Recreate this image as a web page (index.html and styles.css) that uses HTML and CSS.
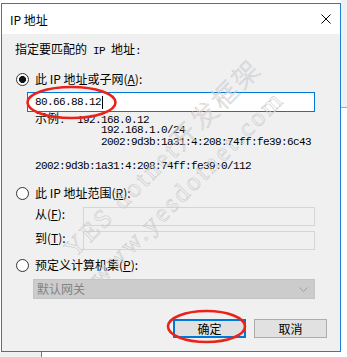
FILE: index.html
```html
<!DOCTYPE html>
<html lang="zh-CN">
<head>
    <meta charset="UTF-8">
    <meta name="viewport" content="width=device-width, initial-scale=1.0">
    <title>IP 地址</title>
    <link rel="stylesheet" href="styles.css">
</head>
<body>

<div class="screen">
  <div class="gap-top"></div>

  <div class="window">
    <div class="titlebar">
      <span class="title">IP 地址</span>
      <svg class="close" width="10" height="10" viewBox="0 0 10 10">
        <path d="M0.5 0.5 L9.5 9.5 M9.5 0.5 L0.5 9.5" stroke="#000" stroke-width="1" />
      </svg>
    </div>

    <div class="dialog">
      <p class="lead">指定要匹配的<span class="mono"> IP </span>地址<span class="mono">:</span></p>

      <div class="radio-row">
        <span class="radio checked"></span>
        <span>此 IP 地址或子网(<u>A</u>):</span>
      </div>
      <div class="textbox active">
        <span class="mono">80.66.88.12</span><span class="caret"></span>
      </div>

      <div class="examples">
        <div class="ex-line"><span class="ex-label">示例<span class="mono">:</span></span><span class="mono">192.168.0.12</span></div>
        <div class="ex-line indent mono">192.168.1.0/24</div>
        <div class="ex-line indent mono">2002:9d3b:1a31:4:208:74ff:fe39:6c43</div>
        <div class="ex-line"></div>
        <div class="ex-line mono">2002:9d3b:1a31:4:208:74ff:fe39:0/112</div>
      </div>

      <div class="radio-row second">
        <span class="radio"></span>
        <span>此 IP 地址范围(<u>R</u>):</span>
      </div>
      <div class="range-row from">
        <span class="range-label">从(<u>F</u>):</span>
        <div class="textbox disabled"></div>
      </div>
      <div class="range-row to">
        <span class="range-label">到(<u>T</u>):</span>
        <div class="textbox disabled"></div>
      </div>

      <div class="radio-row third">
        <span class="radio"></span>
        <span>预定义计算机集(<u>P</u>):</span>
      </div>
      <div class="select">
        <span>默认网关</span>
        <svg width="9" height="5" viewBox="0 0 9 5">
          <path d="M0.5 0.5 L4.5 4.5 L8.5 0.5" fill="none" stroke="#a0a0a0" stroke-width="1" />
        </svg>
      </div>

      <div class="buttons">
        <button class="btn default">确定</button>
        <button class="btn">取消</button>
      </div>
    </div>
  </div>

  <div class="side">
    <div class="side-top"></div>
    <div class="side-rest"></div>
  </div>

  <div class="under">
    <div class="under-left"></div>
    <div class="under-right"></div>
  </div>

  <!-- annotation marks drawn over the screenshot -->
  <svg class="marks" width="347" height="357" viewBox="0 0 347 357">
    <ellipse cx="71.5" cy="102.5" rx="44" ry="15.5" fill="none" stroke="#e8231b" stroke-width="2.6" />
    <ellipse cx="206.5" cy="326.5" rx="38.5" ry="15.5" fill="none" stroke="#e8231b" stroke-width="2.6" />
  </svg>

  <div class="watermark wm-1">YES dotnet开发框架</div>
  <div class="watermark wm-2">www.yesdotnet.com</div>
</div>

</body>
</html>
```

FILE: styles.css
```css
* {
    box-sizing: border-box;
}

body {
    margin: 0;
    background: #fff;
    font-family: "Noto Sans CJK SC", "Noto Sans", sans-serif;
    font-size: 12px;
    color: #000;
}

.screen {
    position: relative;
    width: 347px;
    height: 357px;
    overflow: hidden;
    display: grid;
    grid-template-columns: 1px 340px 6px;
    grid-template-rows: 3px 349px 5px;
}

.gap-top {
    grid-column: 1 / 3;
    grid-row: 1;
}

/* window */

.window {
    grid-column: 2;
    grid-row: 2;
    display: flex;
    flex-direction: column;
    border: 1px solid #1a7fd6;
    background: #f0f0f0;
}

.titlebar {
    height: 30px;
    flex: none;
    display: flex;
    align-items: center;
    justify-content: space-between;
    padding: 0 9px 0 8px;
    background: #fff;
}

.title {
    line-height: 16px;
    padding-top: 1px;
}

.dialog {
    flex: 1;
    padding: 0 13px;
}

/* SimSun-like half width text: 6px per char */
.mono {
    font-family: "Liberation Mono", monospace;
    font-size: 11px;
    letter-spacing: -0.6px;
}

.lead {
    margin: 7px 0 0;
    height: 16px;
    line-height: 16px;
}

.radio-row {
    display: flex;
    align-items: center;
    height: 16px;
    line-height: 16px;
    margin-top: 14px;
}

.radio-row.second {
    margin-top: 13px;
}

.radio-row.third {
    margin-top: 7px;
}

.radio {
    width: 13px;
    height: 13px;
    margin: 0 6px 0 1px;
    border: 1px solid #333;
    border-radius: 50%;
    background: #fff;
}

.radio.checked {
    background: radial-gradient(circle, #111 3.2px, #fff 3.8px);
}

u {
    text-decoration-thickness: 1px;
    text-underline-offset: 1px;
}

.textbox {
    height: 20px;
    border: 1px solid #d5d5d5;
    background: #f0f0f0;
}

.textbox.active {
    display: flex;
    align-items: center;
    width: 288px;
    margin: 5px 0 0 12px;
    padding-left: 7px;
    border-color: #0078d7;
    background: #fff;
}

.caret {
    width: 1px;
    height: 13px;
    margin-left: 1px;
    background: #000;
}

.examples {
    margin-left: 20px;
}

.ex-line {
    height: 12px;
    line-height: 12px;
    white-space: nowrap;
}

.ex-line.indent {
    padding-left: 66px;
}

.ex-label {
    display: inline-block;
    width: 42px;
}

.range-row {
    display: flex;
    align-items: flex-start;
    margin-left: 20px;
}

.range-row.from {
    margin-top: 6px;
}

.range-row.to {
    margin-top: 5px;
}

.range-label {
    width: 48px;
    line-height: 13px;
}

.range-row .textbox {
    width: 232px;
    height: 19px;
}

.select {
    display: flex;
    align-items: center;
    justify-content: space-between;
    width: 282px;
    height: 20px;
    margin: 6px 0 0 18px;
    padding: 0 6px 0 3px;
    background: #cccccc;
    border: 1px solid #c4c4c4;
    color: #838383;
    line-height: 16px;
}

.buttons {
    display: flex;
    justify-content: flex-end;
    gap: 8px;
    margin-top: 20px;
}

.btn {
    width: 73px;
    height: 19px;
    padding: 0;
    font: inherit;
    line-height: 15px;
    color: #000;
    background: #e1e1e1;
    border: 1px solid #adadad;
}

.btn.default {
    border: 2px solid #0078d7;
}

/* what is behind the dialog */

.side {
    grid-column: 3;
    grid-row: 1 / 4;
    display: flex;
    flex-direction: column;
}

.side-top {
    height: 108px;
    background: #f0f0f0;
    border-bottom: 1px solid #a8a8a8;
}

.side-rest {
    flex: 1;
    background: #fff;
}

.under {
    grid-column: 1 / 3;
    grid-row: 3;
    display: flex;
}

.under-left {
    width: 42px;
    background: #f0f0f0;
    border-right: 1px solid #7a7a7a;
}

.under-right {
    flex: 1;
    background: #fff;
}

/* overlays */

.marks {
    position: absolute;
    left: 0;
    top: 0;
    pointer-events: none;
}

.watermark {
    position: absolute;
    white-space: nowrap;
    pointer-events: none;
    font-family: "Liberation Serif", "Noto Sans CJK SC", serif;
    font-size: 26px;
    font-weight: 300;
    letter-spacing: 3px;
    color: transparent;
    -webkit-text-stroke: 0.6px #cdcdcd;
    transform: translate(-50%, -50%) rotate(-45deg);
}

.wm-1 {
    left: 161px;
    top: 156px;
}

.wm-2 {
    left: 187px;
    top: 188px;
}
```
